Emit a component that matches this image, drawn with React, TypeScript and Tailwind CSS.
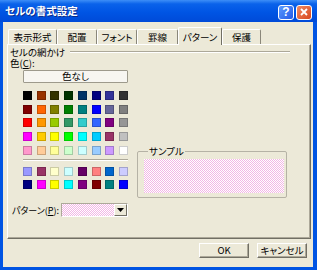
const palette = [
  ["#000000", "#993300", "#333300", "#003300", "#003366", "#000080", "#333399", "#333333"],
  ["#800000", "#ff6600", "#808000", "#008000", "#008080", "#0000ff", "#666699", "#808080"],
  ["#ff0000", "#ff9900", "#99cc00", "#339966", "#33cccc", "#3366ff", "#800080", "#969696"],
  ["#ff00ff", "#ffcc00", "#ffff00", "#00ff00", "#00ffff", "#00ccff", "#993366", "#c0c0c0"],
  ["#ff99cc", "#ffcc99", "#ffff99", "#ccffcc", "#ccffff", "#99ccff", "#cc99ff", "#ffffff"],
];

const chartColors = [
  ["#9999ff", "#993366", "#ffffcc", "#ccffff", "#660066", "#ff8080", "#0066cc", "#ccccff"],
  ["#000080", "#ff00ff", "#ffff00", "#00ffff", "#800080", "#800000", "#008080", "#0000ff"],
];

const tabs = [
  { label: "表示形式", w: "w-[49px]" },
  { label: "配置", w: "w-[40px]" },
  { label: "フォント", w: "w-[40px]" },
  { label: "罫線", w: "w-[41px]" },
  { label: "パターン", w: "w-[44px]", active: true },
  { label: "保護", w: "w-[39px]" },
];

function Swatches({ rows }: { rows: string[][] }) {
  return (
    <div className="flex flex-col gap-y-[4.7px]">
      {rows.map((row, i) => (
        <div key={i} className="flex justify-between">
          {row.map((c, j) => (
            <div
              key={j}
              className="w-[9px] h-[9px] border border-black/20"
              style={{ backgroundColor: c }}
            />
          ))}
        </div>
      ))}
    </div>
  );
}

export default function App() {
  return (
    <div className="w-[317px] h-[270px] flex flex-col bg-[#0054e3] overflow-hidden font-['Noto_Sans_CJK_JP',sans-serif] [font-feature-settings:'palt'] text-[9.5px] leading-[11px] text-black">
      {/* TITLE BAR */}
      <div className="h-[22px] shrink-0 flex items-center pl-[5px] pr-[5px] bg-[linear-gradient(to_bottom,#3d8ef7_0%,#0a62ea_18%,#0055e4_55%,#004ad8_100%)]">
        <span className="text-white font-bold text-[10.5px] leading-[14px] [text-shadow:1px_1px_#0b2a8a]">
          セルの書式設定
        </span>
        <div className="ml-auto mt-[2px] flex gap-[2px]">
          <div className="w-[16px] h-[15px] rounded-[3px] border border-white bg-[linear-gradient(135deg,#5b9bff,#2459e6)] flex items-center justify-center text-white font-bold text-[12px] leading-[12px] font-['Liberation_Sans',sans-serif]">
            ?
          </div>
          <div className="w-[16px] h-[15px] rounded-[3px] border border-white bg-[linear-gradient(135deg,#f08a64,#d8471d)] flex items-center justify-center">
            <svg width="8" height="8" viewBox="0 0 8 8">
              <path d="M1 1 L7 7 M7 1 L1 7" stroke="white" strokeWidth="1.8" />
            </svg>
          </div>
        </div>
      </div>

      {/* BODY */}
      <div className="flex-1 ml-[3px] mr-[4px] mb-[3px] bg-[#ece9d8] flex flex-col pl-[4px] pt-[5px]">
        {/* TABS */}
        <div className="flex items-end h-[17px] ml-[1px] relative z-10">
          {tabs.map((t) =>
            t.active ? (
              <div
                key={t.label}
                className={`${t.w} h-[18px] -mb-px bg-[#ece9d8] border-l border-t border-white border-r border-r-[#716f64] rounded-t-[2px] flex items-center justify-center pt-[1px]`}
              >
                {t.label}
              </div>
            ) : (
              <div
                key={t.label}
                className={`${t.w} h-[15px] border-l border-t border-white border-r border-r-[#8a877a] rounded-t-[2px] flex items-center justify-center pt-[1px]`}
              >
                {t.label}
              </div>
            )
          )}
        </div>

        {/* TAB PANEL */}
        <div className="w-[304px] h-[195px] border-l border-t border-white border-r border-b border-r-[#716f64] border-b-[#716f64] shadow-[inset_-1px_-1px_#aca899] pl-[2px] flex flex-col">
          <div className="flex items-center h-[11px] mt-[1px]">
            <span className="leading-[10px]">セルの網かけ</span>
            <div className="flex-1 ml-[5px] mr-[20px] h-[2px] border-t border-[#aca899] border-b border-b-white" />
          </div>
          <div className="h-[11px] leading-[10px] pt-[1px]">
            色(<span className="underline">C</span>):
          </div>
          <div className="ml-[13px] mt-[2px] w-[105px] h-[13px] border border-[#9d9a8c] bg-[#f7f6f1] rounded-[1px] flex items-center justify-center leading-[11px]">
            色なし
          </div>

          <div className="flex mt-[8px] h-[107px]">
            <div className="ml-[13px] w-[105px] flex flex-col">
              <Swatches rows={palette} />
              <div className="mt-[4px] h-[2px] border-t border-[#aca899] border-b border-b-white" />
              <div className="mt-[6px]">
                <Swatches rows={chartColors} />
              </div>
            </div>
            <fieldset className="ml-[9px] mt-[54px] w-[150px] h-[53px] border border-[#b5b2a5] rounded-[2px] pl-[6px]">
              <legend className="ml-[4px] px-[1px] leading-[12px]">サンプル</legend>
              <div className="mt-[2px] w-[140px] h-[34px] [background-image:conic-gradient(#f2b6e6_25%,#fff_0_50%,#f2b6e6_0_75%,#fff_0)] [background-size:2px_2px]" />
            </fieldset>
          </div>

          <div className="flex items-center mt-[5px] h-[14px]">
            <div className="ml-[2px] w-[49px] whitespace-nowrap text-[9px]">
              パターン(<span className="underline">P</span>):
            </div>
            <div className="w-[67px] h-[14px] flex border border-t-[#aca899] border-l-[#aca899] border-r-white border-b-white">
              <div className="flex-1 [background-image:conic-gradient(#f2b6e6_25%,#fff_0_50%,#f2b6e6_0_75%,#fff_0)] [background-size:2px_2px]" />
              <div className="w-[13px] h-full bg-[#ece9d8] border-t border-l border-white border-r border-b border-r-[#716f64] border-b-[#716f64] flex items-center justify-center">
                <svg width="7" height="4" viewBox="0 0 7 4">
                  <path d="M0 0 H7 L3.5 4 Z" fill="black" />
                </svg>
              </div>
            </div>
          </div>
        </div>

        {/* BUTTONS */}
        <div className="flex justify-end gap-[8px] mt-[4px] pr-[6px]">
          <div className="w-[50px] h-[15px] border-t border-l border-white border-r border-b border-r-[#716f64] border-b-[#716f64] shadow-[inset_-1px_-1px_#aca899] flex items-center justify-center leading-[11px]">
            OK
          </div>
          <div className="w-[50px] h-[15px] border-t border-l border-white border-r border-b border-r-[#716f64] border-b-[#716f64] shadow-[inset_-1px_-1px_#aca899] flex items-center justify-center leading-[11px]">
            キャンセル
          </div>
        </div>
      </div>
    </div>
  );
}
